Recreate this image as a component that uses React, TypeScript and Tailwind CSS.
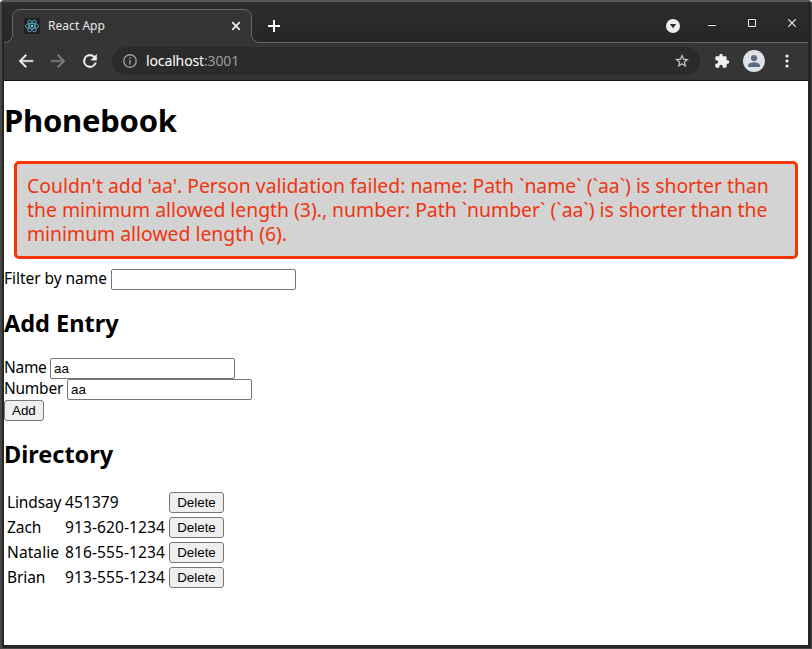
import type { ReactNode } from 'react';

const people = [
  { name: 'Lindsay', number: '451379', tracking: 'tracking-[-0.14px]' },
  { name: 'Zach', number: '913-620-1234', tracking: 'tracking-[-0.05px]' },
  { name: 'Natalie', number: '816-555-1234', tracking: 'tracking-[0.1px]' },
  { name: 'Brian', number: '913-555-1234', tracking: 'tracking-[-0.1px]' },
];

function ReactLogo() {
  return (
    <svg width="16" height="16" viewBox="0 0 16 16" fill="none" stroke="#5cb5d0" strokeWidth="0.8">
      <rect width="16" height="16" rx="1.5" fill="#202124" stroke="none" />
      <ellipse cx="8" cy="8" rx="6.7" ry="2.6" />
      <ellipse cx="8" cy="8" rx="6.7" ry="2.6" transform="rotate(60 8 8)" />
      <ellipse cx="8" cy="8" rx="6.7" ry="2.6" transform="rotate(120 8 8)" />
      <circle cx="8" cy="8" r="1.3" fill="#61dafb" stroke="none" />
    </svg>
  );
}

function Tab() {
  return (
    <div className="relative ml-2 h-[34px] w-[240px] shrink-0">
      <svg className="absolute -left-2 top-0" width="256" height="34" viewBox="0 0 256 34">
        <path
          d="M0 33.5C5 33.5 8.5 30 8.5 25.500V8.500C8.500 3.500 12 .5 16.500 .5H239.500C244.500 .5 247.500 3.500 247.500 8.500V25.500C247.500 30 251 33.500 256 33.500V34H0Z"
          fill="#353535"
        />
        <path
          d="M0 33.5C5 33.5 8.5 30 8.5 25.500V8.500C8.500 3.500 12 .5 16.500 .5H239.500C244.500 .5 247.500 3.500 247.500 8.500V25.500C247.500 30 251 33.500 256 33.500"
          fill="none"
          stroke="#6b6b6b"
        />
      </svg>
      <div className="relative flex h-[34px] items-center pl-3">
        <ReactLogo />
        <span className="ml-2 h-4 w-[178px] text-[12px] leading-4 tracking-[0.04px] text-[#e6e6e6]">React App</span>
        <svg width="20" height="16" viewBox="0 0 20 16" stroke="#f0f0f0" strokeWidth="1.7">
          <path d="M6.200 4.200l7.600 7.600M13.800 4.200l-7.600 7.600" />
        </svg>
      </div>
    </div>
  );
}

function TitleBar() {
  return (
    <div className="flex h-[41px] items-end bg-linear-to-b from-[#2d2d2d] to-[#262626]">
      <Tab />
      <div className="ml-2 flex h-[34px] flex-1 items-center border-b border-[#666]">
        <svg className="ml-[7px]" width="14" height="14" viewBox="0 0 14 14" stroke="#fafafa" strokeWidth="2">
          <path d="M7 1v12M1 7h12" />
        </svg>
        <svg className="ml-auto" width="14" height="14" viewBox="0 0 14 14">
          <circle cx="7" cy="7" r="7" fill="#eeeeec" />
          <path d="M3.800 5h6.400L7 9.300Z" fill="#2a2a2a" />
        </svg>
        <svg className="mb-[5px] ml-7" width="8" height="8" viewBox="0 0 8 8">
          <path d="M0 5h8v1H0z" fill="#0c0c0c" />
          <path d="M0 6h8v1H0z" fill="#f2f2f2" />
        </svg>
        <svg className="mb-[5px] ml-8" width="8" height="10" viewBox="0 0 8 10">
          <path d="M0 0h8v1H0zM1 2h6v1H1z" fill="#111" />
          <path d="M.5 1.500h7v7h-7z" fill="none" stroke="#f2f2f2" />
        </svg>
        <svg className="mb-[5px] ml-8 mr-3" width="8" height="8" viewBox="0 0 8 8" stroke="#f2f2f2" strokeWidth="1.2">
          <path d="M.3.3l7.400 7.400M7.700.3L.3 7.700" />
        </svg>
      </div>
    </div>
  );
}

function Toolbar() {
  return (
    <div className="flex h-[38px] items-center border-b border-[#141214] bg-[#353535] pb-px pl-3">
      <svg width="20" height="20" viewBox="0 0 24 24" fill="#f2f2f2" stroke="#f2f2f2" strokeWidth=".4">
        <path d="M20.500 11H7.330l5.590-5.590L11.500 4l-8 8 8 8 1.410-1.410L7.330 13H20.500v-2z" />
      </svg>
      <svg className="ml-3" width="20" height="20" viewBox="0 0 24 24" fill="#7d7d7b" stroke="#7d7d7b" strokeWidth=".4">
        <path d="M3.500 11h13.170l-5.590-5.590L12.500 4l8 8-8 8-1.410-1.410L16.670 13H3.500v-2z" />
      </svg>
      <svg className="ml-3" width="20" height="20" viewBox="0 0 24 24" fill="#f2f2f2" stroke="#f2f2f2" strokeWidth=".5">
        <path d="M17.650 6.350A7.960 7.960 0 0 0 12 4a8 8 0 1 0 7.730 10h-2.080A6 6 0 1 1 12 6c1.660 0 3.140.69 4.220 1.780L13 11h7V4l-2.350 2.350z" />
      </svg>
      <div className="ml-3 flex h-7 w-[588px] items-center rounded-full bg-[#2b2b2b] pl-[11px] pr-[10px]">
        <svg width="14" height="14" viewBox="0 0 14 14" fill="none" stroke="#9a9ba0" strokeWidth="1.400">
          <circle cx="7" cy="7" r="6.200" />
          <path d="M7 6v4.500" strokeWidth="1.500" />
          <path d="M7 3.400v1.500" strokeWidth="1.500" />
        </svg>
        <span className="ml-[9px] text-[14px] leading-5 tracking-[-0.13px] text-white">
          localhost<span className="text-[#9b9b9b]">:3001</span>
        </span>
        <svg className="ml-auto" width="16" height="16" viewBox="0 0 24 24" fill="#c9c9c9">
          <path d="M22 9.240l-7.190-.62L12 2 9.190 8.630 2 9.240l5.460 4.730L5.820 21 12 17.270 18.180 21l-1.630-7.030L22 9.240zM12 15.400l-3.760 2.270 1-4.280-3.320-2.880 4.380-.38L12 6.100l1.710 4.040 4.380.38-3.320 2.880 1 4.280L12 15.400z" stroke="#c9c9c9" strokeWidth=".3" />
        </svg>
      </div>
      <svg className="ml-[14px]" width="16" height="16" viewBox="0 0 24 24" fill="#f0f0ee">
        <path d="M20.500 11H19V7c0-1.100-.9-2-2-2h-4V3.500a2.500 2.500 0 0 0-5 0V5H4c-1.100 0-1.990.9-1.990 2v3.800H3.500a2.700 2.700 0 0 1 0 5.400H2V20c0 1.100.9 2 2 2h3.800v-1.500a2.700 2.700 0 0 1 5.400 0V22H17c1.100 0 2-.9 2-2v-4h1.500a2.500 2.500 0 0 0 0-5z" />
      </svg>
      <svg className="ml-[13px]" width="22" height="22" viewBox="0 0 22 22">
        <circle cx="11" cy="11" r="11" fill="#dee1e6" />
        <circle cx="11" cy="8" r="3.100" fill="#5f6b80" />
        <path d="M5 17v-1.500c0-2.200 4-3.300 6-3.300s6 1.100 6 3.300V17z" fill="#5f6b80" />
      </svg>
      <svg className="ml-[19.500px]" width="4" height="14" viewBox="0 0 4 14" fill="#f2f2f2">
        <circle cx="2" cy="2" r="1.600" />
        <circle cx="2" cy="7" r="1.600" />
        <circle cx="2" cy="12" r="1.600" />
      </svg>
    </div>
  );
}

function Field({ label, value, labelStyle }: { label: string; value: string; labelStyle: string }) {
  return (
    <label className="flex h-[21px]">
      <span className={`${labelStyle} shrink-0 whitespace-nowrap leading-[18px]`}>{label}</span>
      <input
        className="h-[21px] w-[185px] rounded-[2px] border border-[#767676] bg-white px-[3px] font-['Liberation_Sans',sans-serif] text-[13.333px]"
        defaultValue={value}
      />
    </label>
  );
}

function Button({ children }: { children: ReactNode }) {
  return (
    <button className="h-[21px] rounded-[3px] border border-[#767676] bg-[#efefef] px-[7px] font-['Liberation_Sans',sans-serif] text-[13.333px] leading-[19px]">
      {children}
    </button>
  );
}

function Phonebook() {
  return (
    <main className="flex flex-1 flex-col items-start bg-white text-[15.5px] text-black">
      <h1 className="mt-[21px] h-[37px] text-[31px] font-bold leading-[37px] tracking-[-0.24px]">Phonebook</h1>
      <div className="mx-[10px] mb-[10px] mt-[22px] h-[98px] w-[784px] whitespace-nowrap rounded-[5px] border-[3px] border-[#f63500] bg-[#d3d3d3] p-[10px] text-[19.4px] leading-6 tracking-[-0.02px] text-[#ee3510]">
        Couldn't add 'aa'. Person validation failed: name: Path `name` (`aa`) is shorter than
        <br />
        the minimum allowed length (3)., number: Path `number` (`aa`) is shorter than the
        <br />
        minimum allowed length (6).
      </div>
      <Field label="Filter by name" value="" labelStyle="w-[107px] tracking-[-0.04px]" />
      <h2 className="mb-[21px] mt-[19px] h-7 text-[23.500px] font-bold leading-7">Add Entry</h2>
      <Field label="Name" value="aa" labelStyle="w-[46px] tracking-[-0.3px]" />
      <Field label="Number" value="aa" labelStyle="w-[63px] tracking-[-0.25px]" />
      <Button>Add</Button>
      <h2 className="mb-[22px] mt-[19px] h-[30px] text-[23.500px] font-bold leading-7">Directory</h2>
      <div className="grid grid-cols-[58px_104px_55px] gap-y-1 pl-[3px]">
        {people.map((p) => (
          <div key={p.name} className="contents">
            <span className={`h-[21px] leading-[21px] ${p.tracking}`}>{p.name}</span>
            <span className="h-[21px] leading-[21px] tracking-[0.1px]">{p.number}</span>
            <Button>Delete</Button>
          </div>
        ))}
      </div>
    </main>
  );
}

export default function App() {
  return (
    <div className="h-[649px] w-[812px] bg-white font-['Noto_Sans',sans-serif]">
      <div className="flex h-full rounded-t-[4px] border-b border-l-2 border-r border-t-2 border-b-[#484848] border-l-[#484744] border-r-[#484848] border-t-[#585858] bg-[#262626]">
        <div className="flex w-[808px] flex-col border-b-[3px] border-l-2 border-r-[2px] border-[#262626]">
          <TitleBar />
          <Toolbar />
          <Phonebook />
        </div>
      </div>
    </div>
  );
}
